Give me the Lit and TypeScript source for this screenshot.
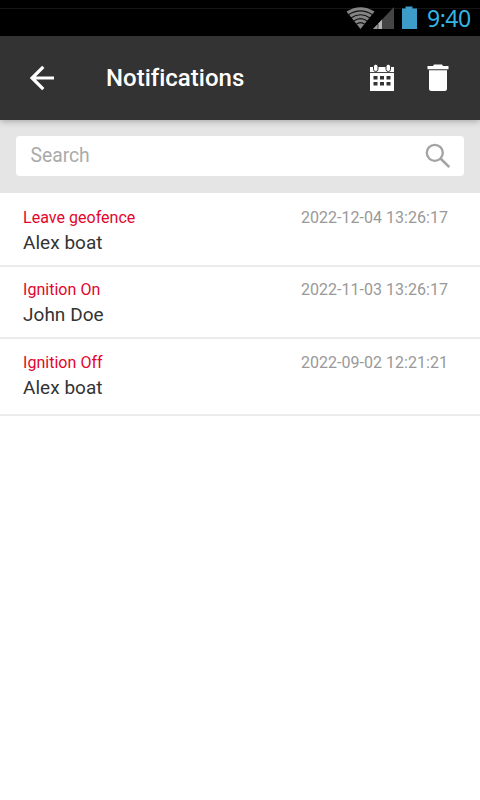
import { LitElement, html, css } from "lit";
import { customElement } from "lit/decorators.js";

interface Notice {
  kind: string;
  name: string;
  time: string;
}

const notices: Notice[] = [
  { kind: "Leave geofence", name: "Alex boat", time: "2022-12-04 13:26:17" },
  { kind: "Ignition On", name: "John Doe", time: "2022-11-03 13:26:17" },
  { kind: "Ignition Off", name: "Alex boat", time: "2022-09-02 12:21:21" },
];

@customElement("status-bar")
class StatusBar extends LitElement {
  static styles = css`
    :host {
      display: flex;
      box-sizing: border-box;
      height: 36px;
      justify-content: flex-end;
      padding-right: 9px;
      background: linear-gradient(#000 8px, #161616 8px, #161616 9px, #000 9px);
    }
    .icons { width: 76px; height: 36px; margin-right: 5px; }
    .clock {
      width: 44px;
      font: 400 23px/36px "Noto Sans", "Open Sans", sans-serif;
      letter-spacing: -0.5px;
      color: #33b5e5;
      white-space: nowrap;
    }
  `;
  render() {
    return html`
      <svg class="icons" viewBox="346 0 76 36" fill="none">
        <path d="M346.500 11.500Q360.500 3 374.500 11.500L360.500 29Z" fill="#858585" />
        <g stroke="#111" stroke-width="1.100">
          <path d="M348.500 14.700Q360.500 7 372.500 14.700" />
          <path d="M351 18Q360.500 11.500 370 18" />
          <path d="M353.500 21.200Q360.500 16 367.500 21.200" />
          <path d="M356 24.400Q360.500 20.800 365 24.400" />
        </g>
        <path d="M373 29L394 7V29Z" fill="#454545" />
        <path d="M373 29L377.500 24.300V29Z" fill="#999" />
        <path d="M378.500 29V23.200L382 19.500V29Z" fill="#b5b5b5" />
        <path d="M402 8.500h3.500V6.500h7v2h4.500V29h-15z" fill="#3d9dc8" />
      </svg>
      <span class="clock">9:40</span>
    `;
  }
}

@customElement("app-bar")
class AppBar extends LitElement {
  static styles = css`
    :host {
      display: flex;
      box-sizing: border-box;
      height: 84px;
      align-items: center;
      padding: 0 31px 0 30px;
      background: #333;
      color: #fff;
      position: relative;
      box-shadow: 0 1px 7px rgba(0, 0, 0, 0.3);
    }
    .back { width: 25px; height: 26px; }
    .title {
      flex: 1;
      margin: 0 0 0 51px;
      font: 500 24px/28px Roboto, sans-serif;
      font-variant-ligatures: none;
      white-space: nowrap;
    }
    .calendar { width: 26px; height: 28px; margin-right: 32px; }
    .trash { width: 22px; height: 28px; }
  `;
  render() {
    return html`
      <svg class="back" viewBox="30 65 25 26" fill="none" stroke="#fff" stroke-width="3.200">
        <path d="M54 78H32M43.300 66.800L32.100 78L43.300 89.200" />
      </svg>
      <h1 class="title">Notifications</h1>
      <svg class="calendar" viewBox="369 64 26 28">
        <path d="M370 67H394V91H370Z" fill="#fff" />
        <path d="M370 72H394V73H370Z" fill="#444" />
        <g fill="#fff" stroke="#333" stroke-width="1">
          <rect x="373.500" y="64.200" width="4.500" height="7.300" rx="2.200" />
          <rect x="386" y="64.200" width="4.500" height="7.300" rx="2.200" />
        </g>
        <path
          d="M373.500 76h4v3.500h-4zM380 76h4v3.500h-4zM386.500 76h4v3.500h-4zM373.500 82h4v3.500h-4zM380 82h4v3.500h-4zM386.500 82h4v3.500h-4z"
          fill="#333"
        />
      </svg>
      <svg class="trash" viewBox="427 64 22 28" fill="#fff">
        <path d="M427.500 66H433L434 64.500H442L443 66H448.500V69.300H427.500Z" />
        <path d="M429 70.200H447V88.500Q447 91 444.500 91H431.500Q429 91 429 88.500Z" />
      </svg>
    `;
  }
}

@customElement("search-panel")
class SearchPanel extends LitElement {
  static styles = css`
    :host {
      display: block;
      box-sizing: border-box;
      height: 73px;
      padding: 16px 16px 0;
      background: #e5e5e5;
    }
    .field {
      display: flex;
      box-sizing: border-box;
      height: 40px;
      align-items: center;
      justify-content: space-between;
      padding: 0 13px 0 14.5px;
      border-radius: 4px;
      background: #fff;
    }
    .hint { font: 400 19.3px/38px Roboto, sans-serif; color: #aaa; }
    .lens { width: 26px; height: 26px; }
  `;
  render() {
    return html`
      <div class="field">
        <span class="hint">Search</span>
        <svg class="lens" viewBox="425 143 26 26" fill="none" stroke="#a3a3a3">
          <circle cx="434.800" cy="152.800" r="8" stroke-width="2.300" />
          <path d="M440.500 158.500L449.300 167.200" stroke-width="2.600" />
        </svg>
      </div>
    `;
  }
}

@customElement("app-root")
class AppRoot extends LitElement {
  static styles = css`
    :host {
      display: block;
      height: 800px;
      overflow: hidden;
      background: #fff;
      font-family: Roboto, sans-serif;
    }
    .list { margin: 0; padding: 0; list-style: none; }
    .row {
      display: grid;
      box-sizing: border-box;
      height: 72px;
      grid-template: 24px 26px / 1fr auto;
      padding: 11px 32px 0 23px;
      border-bottom: 2px solid #ebebeb;
    }
    .row:first-child { height: 74px; padding-top: 13px; }
    .row:last-child { height: 77px; padding-top: 12px; }
    .kind { font-size: 16px; line-height: 24px; letter-spacing: 0.03px; color: #e2062c; }
    .time { font-size: 16px; line-height: 24px; letter-spacing: 0.03px; color: #999; }
    .name { font-size: 19px; line-height: 26px; letter-spacing: 0.03px; color: #333; }
  `;
  render() {
    return html`
      <status-bar></status-bar>
      <app-bar></app-bar>
      <search-panel></search-panel>
      <ul class="list">
        ${notices.map(
          (n) => html`
            <li class="row">
              <span class="kind">${n.kind}</span>
              <time class="time">${n.time}</time>
              <span class="name">${n.name}</span>
            </li>
          `
        )}
      </ul>
    `;
  }
}
